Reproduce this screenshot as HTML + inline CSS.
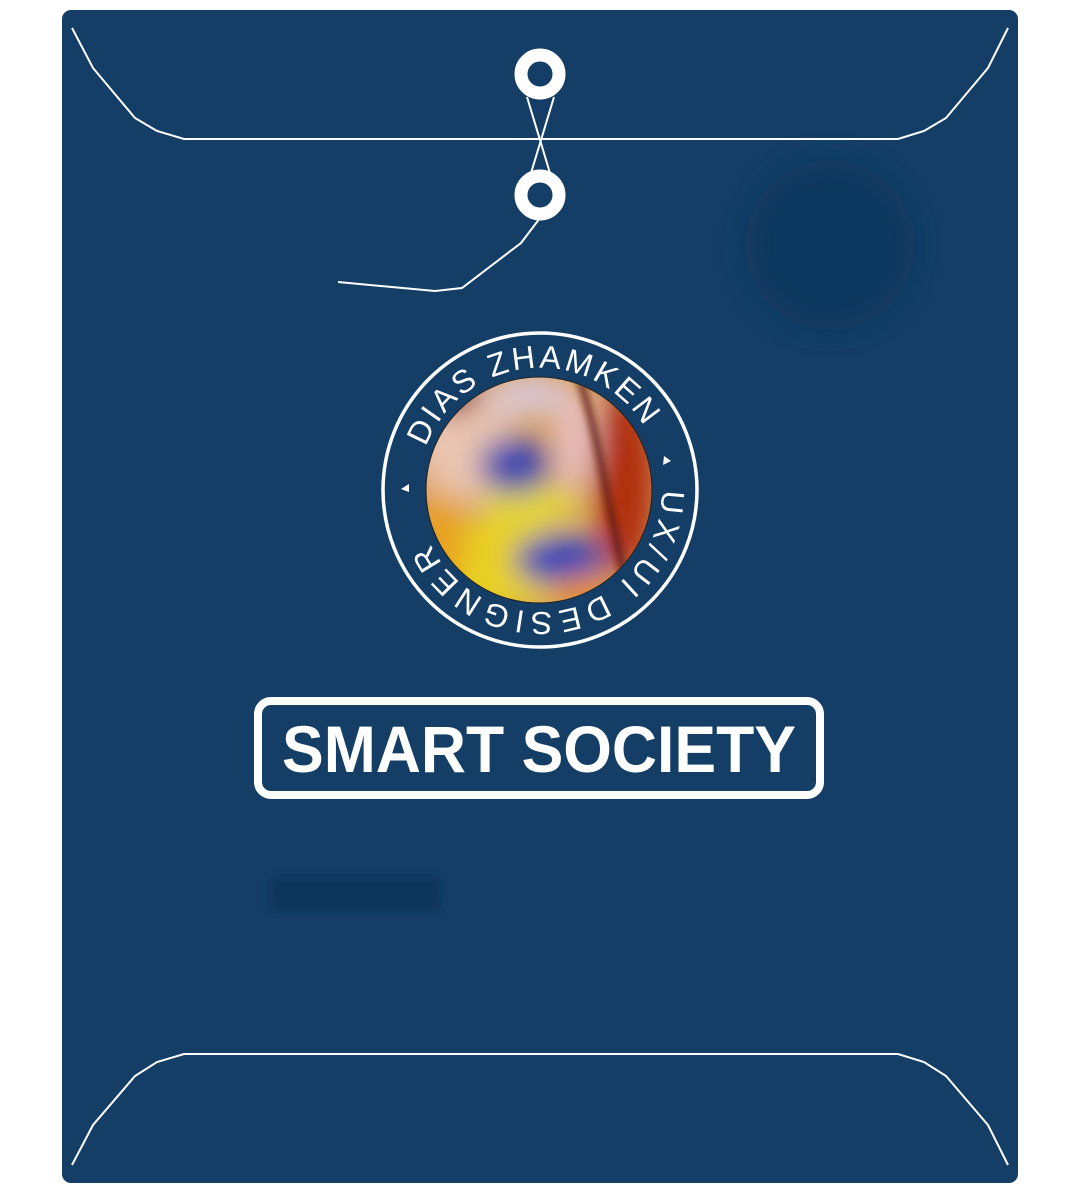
<!DOCTYPE html>
<html><head><meta charset="utf-8"><style>
html,body{margin:0;padding:0;background:#fff;width:1080px;height:1200px;overflow:hidden}
svg{display:block}
</style></head><body>
<svg width="1080" height="1200" viewBox="0 0 1080 1200" xmlns="http://www.w3.org/2000/svg">
<defs>
<filter id="b20" x="-50%" y="-50%" width="200%" height="200%"><feGaussianBlur stdDeviation="14"/></filter>
<filter id="b6" x="-50%" y="-50%" width="200%" height="200%"><feGaussianBlur stdDeviation="4"/></filter>
<filter id="b12" x="-50%" y="-50%" width="200%" height="200%"><feGaussianBlur stdDeviation="14"/></filter>
<clipPath id="ic"><circle cx="539" cy="490" r="113"/></clipPath>
<path id="ring" d="M418,490 A122,122 0 1 1 662,490 A122,122 0 1 1 418,490"/>
</defs>
<rect x="62" y="10" width="956" height="1173" rx="9" fill="#143e66"/>
<circle cx="830" cy="245" r="85" fill="#11385f" filter="url(#b12)"/>
<rect x="270" y="877" width="170" height="33" rx="4" fill="#0f355b" filter="url(#b6)"/>
<g fill="none" stroke="#fff" stroke-width="2">
<path d="M72,28 L93,68 L135,118 L157,131 L184,139 L898,139 L924,131 L946,118 L988,68 L1008,28"/>
<path d="M72,1165 L93,1125 L135,1076 L157,1062 L184,1054 L898,1054 L924,1062 L946,1076 L988,1125 L1008,1165"/>
<path d="M527,97 L553,183 M554,97 L528,183"/>
<path d="M540,218 L521,243 L462,288 L435,291 L338,282"/>
</g>
<circle cx="540" cy="74" r="19" fill="none" stroke="#fff" stroke-width="13"/>
<circle cx="540" cy="195" r="19" fill="none" stroke="#fff" stroke-width="13"/>
<circle cx="540" cy="490" r="157" fill="none" stroke="#fff" stroke-width="3.5"/>
<g clip-path="url(#ic)">
<rect x="420" y="370" width="240" height="240" fill="#d9a060"/>
<g filter="url(#b20)">
<ellipse cx="465" cy="440" rx="50" ry="60" fill="#e9c4b0"/>
<ellipse cx="490" cy="565" rx="90" ry="45" fill="#e8d020"/>
<ellipse cx="530" cy="505" rx="50" ry="22" fill="#e3d43a"/>
<ellipse cx="515" cy="465" rx="35" ry="28" fill="#3d46b0"/>
<ellipse cx="560" cy="560" rx="45" ry="25" fill="#3345b8"/>
<ellipse cx="440" cy="540" rx="25" ry="50" fill="#e8a020"/>
<ellipse cx="625" cy="480" rx="30" ry="95" fill="#b02e0c"/>
<ellipse cx="575" cy="440" rx="20" ry="50" fill="#e8c0c0"/>
<ellipse cx="530" cy="395" rx="40" ry="20" fill="#d8c8d8"/>
<ellipse cx="590" cy="595" rx="40" ry="20" fill="#e89020"/>
<ellipse cx="455" cy="395" rx="25" ry="18" fill="#8a2010"/>
</g>
<path d="M580,380 C600,440 610,520 630,600" stroke="#5a1810" stroke-width="6" fill="none" filter="url(#b6)"/>
</g>
<circle cx="539" cy="490" r="113" fill="none" stroke="#222" stroke-width="1"/>
<g fill="#fff" font-family="Liberation Sans, sans-serif" font-size="32">
<text><textPath href="#ring" startOffset="44" textLength="272" lengthAdjust="spacing">DIAS ZHAMKEN</textPath></text>
<text><textPath href="#ring" startOffset="383" textLength="328" lengthAdjust="spacing">UX/UI DESIGNER</textPath></text>
</g>
<path d="M664,456 L671,461 L663,465 Z" fill="#fff"/>
<path d="M409,484 L409,492 L401,489 Z" fill="#fff"/>
<rect x="258" y="701" width="562" height="94" rx="13" fill="none" stroke="#fff" stroke-width="8"/>
<text x="282" y="772" fill="#fff" font-family="Liberation Sans, sans-serif" font-weight="bold" font-size="66" textLength="514" lengthAdjust="spacingAndGlyphs">SMART SOCIETY</text>
</svg>
</body></html>
